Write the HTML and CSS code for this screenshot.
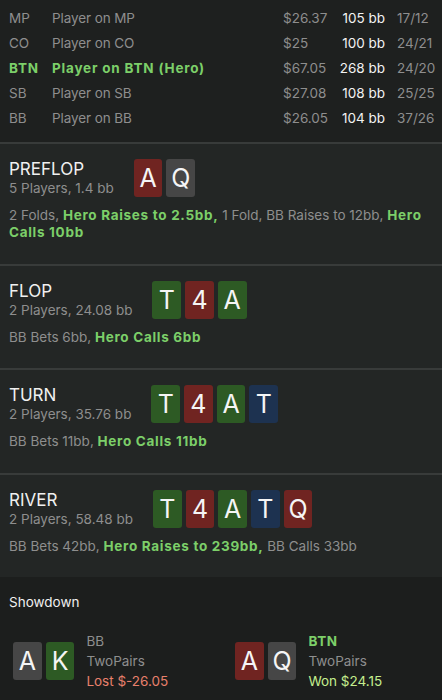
FILE: index.html
```html
<!DOCTYPE html>
<html>
<head>
<meta charset="utf-8">
<link rel="stylesheet" href="styles.css">
</head>
<body>
<div class="players">
  <div class="prow"><span class="pos">MP</span><span class="name">Player on MP</span><span class="stack">$26.37</span><span class="bb">105 bb</span><span class="stat">17/12</span></div>
  <div class="prow"><span class="pos">CO</span><span class="name">Player on CO</span><span class="stack">$25</span><span class="bb">100 bb</span><span class="stat">24/21</span></div>
  <div class="prow hero"><span class="pos">BTN</span><span class="name">Player on BTN (Hero)</span><span class="stack">$67.05</span><span class="bb">268 bb</span><span class="stat">24/20</span></div>
  <div class="prow"><span class="pos">SB</span><span class="name">Player on SB</span><span class="stack">$27.08</span><span class="bb">108 bb</span><span class="stat">25/25</span></div>
  <div class="prow"><span class="pos">BB</span><span class="name">Player on BB</span><span class="stack">$26.05</span><span class="bb">104 bb</span><span class="stat">37/26</span></div>
</div>

<section class="street pre">
  <div class="head">
    <div class="info"><div class="title">PREFLOP</div><div class="sub">5 Players, 1.4 bb</div></div>
    <div class="cards"><span class="card red">A</span><span class="card gray">Q</span></div>
  </div>
  <div class="actions">2 Folds, <b>Hero Raises to 2.5bb,</b> 1 Fold, BB Raises to 12bb, <b>Hero</b> <b>Calls 10bb</b></div>
</section>

<section class="street">
  <div class="head">
    <div class="info"><div class="title">FLOP</div><div class="sub">2 Players, 24.08 bb</div></div>
    <div class="cards"><span class="card green">T</span><span class="card red">4</span><span class="card green">A</span></div>
  </div>
  <div class="actions">BB Bets 6bb, <b>Hero Calls 6bb</b></div>
</section>

<section class="street turn">
  <div class="head">
    <div class="info"><div class="title">TURN</div><div class="sub">2 Players, 35.76 bb</div></div>
    <div class="cards"><span class="card green">T</span><span class="card red">4</span><span class="card green">A</span><span class="card blue">T</span></div>
  </div>
  <div class="actions">BB Bets 11bb, <b>Hero Calls 11bb</b></div>
</section>

<section class="street">
  <div class="head">
    <div class="info"><div class="title">RIVER</div><div class="sub">2 Players, 58.48 bb</div></div>
    <div class="cards"><span class="card green">T</span><span class="card red">4</span><span class="card green">A</span><span class="card blue">T</span><span class="card red">Q</span></div>
  </div>
  <div class="actions">BB Bets 42bb, <b>Hero Raises to 239bb,</b> BB Calls 33bb</div>
</section>

<section class="showdown">
  <div class="sd-title">Showdown</div>
  <div class="hands">
    <div class="hand">
      <div class="cards"><span class="card gray">A</span><span class="card green">K</span></div>
      <div class="hinfo"><div class="hpos">BB</div><div class="hrank">TwoPairs</div><div class="lost">Lost $-26.05</div></div>
    </div>
    <div class="hand">
      <div class="cards"><span class="card red">A</span><span class="card gray">Q</span></div>
      <div class="hinfo"><div class="hpos herotxt">BTN</div><div class="hrank">TwoPairs</div><div class="won">Won $24.15</div></div>
    </div>
  </div>
</section>
</body>
</html>
```

FILE: styles.css
```css
* { box-sizing: border-box; }
html, body { margin: 0; padding: 0; }
body {
  width: 442px;
  height: 700px;
  overflow: hidden;
  background: #1c1e1d;
  font-family: Inter, "Noto Sans", sans-serif;
  font-size: 13.5px;
  color: #8e8e8e;
}
.players {
  background: #1e201f;
  padding: 5px 0 12px 9px;
  height: 142px;
}
.prow {
  display: grid;
  grid-template-columns: 43px 231px 52px 50px 57px;
  height: 25px;
  align-items: center;
  white-space: nowrap;
}
.prow .name { letter-spacing: -0.1px; }
.prow .bb { color: #f2f2f2; text-align: right; }
.prow .stat { padding-left: 12px; }
.prow.hero .pos, .prow.hero .name { color: #7ccf69; font-weight: 700; letter-spacing: 0.8px; }

.street {
  background: #232625;
  border-top: 2px solid #383b3a;
  padding: 15px 9px 22px 9px;
}
.street.pre { padding-bottom: 23px; }
.street.turn { padding-bottom: 23px; }
.head {
  display: flex;
  align-items: center;
  gap: 20px;
}
.title {
  color: #f0f0f0;
  font-size: 17px;
  line-height: 21px;
}
.sub {
  font-size: 13.5px;
  line-height: 17px;
}
.cards { display: flex; gap: 4px; }
.card {
  width: 28.7px;
  height: 38px;
  border-radius: 3px;
  display: flex;
  align-items: center;
  justify-content: center;
  color: #f5f5f5;
  font-size: 25px;
  line-height: 1;
}
.card.red { background: #702421; }
.card.gray { background: #464646; }
.card.green { background: #2d5a24; }
.card.blue { background: #1d3250; }
.actions {
  margin-top: 10px;
  font-size: 13.5px;
  line-height: 17px;
}
.actions b { color: #7ccf69; font-weight: 700; letter-spacing: 0.7px; }

.showdown {
  background: #1c1e1d;
  padding: 17px 9px 0 9px;
}
.sd-title {
  color: #f0f0f0;
  font-size: 13.5px;
  line-height: 17px;
}
.hands {
  display: grid;
  grid-template-columns: 222px 1fr;
  margin-top: 20px;
}
.hand {
  display: flex;
  align-items: center;
  gap: 12px;
  padding-left: 4px;
}
.hinfo { font-size: 13.5px; line-height: 20px; }
.herotxt { color: #7ccf69; font-weight: 700; letter-spacing: 0.6px; }
.lost { color: #e8806c; }
.won { color: #c4ee8e; }
```
